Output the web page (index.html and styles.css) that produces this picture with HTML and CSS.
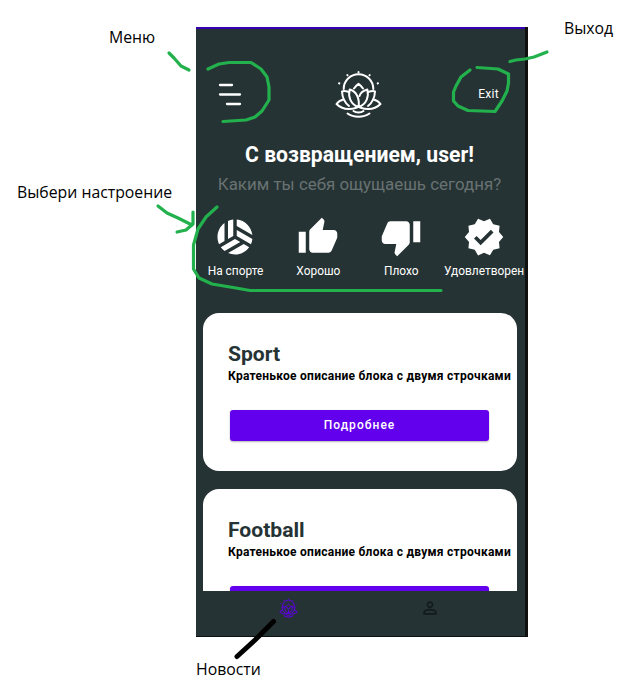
FILE: index.html
```
<!DOCTYPE html>
<html lang="ru">
<head>
<meta charset="utf-8">
<title>Новости</title>
<link rel="stylesheet" href="styles.css">
</head>
<body>
<svg class="defs" width="0" height="0" aria-hidden="true">
  <symbol id="lotus" viewBox="0 0 47 50">
    <g fill="none" stroke="currentColor" stroke-linecap="round" stroke-linejoin="round">
      <path d="M8.700 20A14.800 14.800 0 0 1 38.300 20"/>
      <path d="M19 19.500Q21 16.500 23.500 14.800Q26 16.500 28 19.500"/>
      <path d="M23.500 38C15 35 13 27 14.700 20.500C21 22 25 29 23.500 38C32 35 34 27 32.300 20.500C28.500 21.500 25.500 23.500 24.500 27"/>
      <path d="M14 23Q9 21.500 7 22.500Q7.500 32 14 37M33 23Q38 21.500 40 22.500Q39.500 32 33 37"/>
      <path d="M8.500 30.500Q4 31.500 1.500 35C7 40.500 15 41 22 38.500M38.500 30.500Q43 31.500 45.500 35C40 40.500 32 41 25 38.500"/>
      <path d="M18.500 42Q20.500 43.500 23.500 43.500T28.500 42M12.500 44.500Q17 47.700 23.500 47.700T34.500 44.500"/>
      <path d="M23.500 3V3.400M12.300 6L12.500 6.300M34.700 6L34.500 6.300M4 14.200L4.300 14.400M43 14.200L42.700 14.400"/>
    </g>
  </symbol>
</svg>

<main class="phone">
  <div class="screen">
    <div class="status"></div>
    <header class="top">
      <svg class="menu" viewBox="0 0 26 26"><path d="M4 4H16M4 13.500H24M11 23H24"/></svg>
      <svg class="logo"><use href="#lotus"/></svg>
      <span class="exit">Exit</span>
    </header>
    <section class="greeting">
      <h1>С возвращением, user!</h1>
      <p>Каким ты себя ощущаешь сегодня?</p>
    </section>
    <section class="moods">
      <div class="mood">
        <svg viewBox="0 0 24 24"><path d="M6 4.010C3.580 5.840 2 8.730 2 12c0 1.460.32 2.850.89 4.110L6 14.310zM11 11.420V2.050c-1.060.11-2.070.38-3 .79v10.320zM12 13.150l-8.110 4.680c.61.84 1.340 1.590 2.180 2.200L15 14.890zM13 7.960v3.460l8.110 4.680c.42-.93.70-1.930.82-2.980zM8.070 21.200c1.210.51 2.530.80 3.930.80 3.340 0 6.290-1.650 8.110-4.160L17 16.040zM21.920 10.810c-.55-4.630-4.260-8.300-8.920-8.760v3.600z"/></svg>
        <span>На спорте</span>
      </div>
      <div class="mood">
        <svg viewBox="0 0 24 24"><path d="M1 21h4V9H1v12zm22-11c0-1.100-.9-2-2-2h-6.310l.95-4.570.03-.32c0-.41-.17-.79-.44-1.060L14.170 1 7.590 7.590C7.220 7.950 7 8.450 7 9v10c0 1.100.9 2 2 2h9c.83 0 1.540-.5 1.840-1.220l3.020-7.050c.09-.23.14-.47.14-.73z"/></svg>
        <span>Хорошо</span>
      </div>
      <div class="mood">
        <svg viewBox="0 0 24 24"><path transform="rotate(180 12 12)" d="M1 21h4V9H1v12zm22-11c0-1.100-.9-2-2-2h-6.310l.95-4.570.03-.32c0-.41-.17-.79-.44-1.060L14.170 1 7.590 7.590C7.220 7.950 7 8.450 7 9v10c0 1.100.9 2 2 2h9c.83 0 1.540-.5 1.840-1.220l3.020-7.050c.09-.23.14-.47.14-.73z"/></svg>
        <span>Плохо</span>
      </div>
      <div class="mood">
        <svg viewBox="0 0 24 24"><path d="M23 12l-2.440-2.790.34-3.690-3.610-.82-1.890-3.200L12 2.960 8.600 1.500 6.710 4.690 3.100 5.500l.34 3.700L1 12l2.440 2.790-.34 3.700 3.610.82L8.600 22.500l3.400-1.470 3.400 1.460 1.890-3.190 3.610-.82-.34-3.690zM10.090 16.720l-3.800-3.810 1.480-1.480 2.320 2.330 5.850-5.870 1.480 1.480z" fill-rule="evenodd"/></svg>
        <span>Удовлетворен</span>
      </div>
    </section>
    <section class="feed">
      <article class="card">
        <h2>Sport</h2>
        <p>Кратенькое описание блока с двумя строчками</p>
        <button>Подробнее</button>
      </article>
      <article class="card">
        <h2>Football</h2>
        <p>Кратенькое описание блока с двумя строчками</p>
        <button></button>
      </article>
    </section>
    <nav class="tabs">
      <svg class="tab-news"><use href="#lotus"/></svg>
      <svg class="tab-user" viewBox="0 0 24 24"><path d="M12 6c1.100 0 2 .9 2 2s-.9 2-2 2-2-.9-2-2 .9-2 2-2m0 9c2.700 0 5.800 1.290 6 2v1H6v-.99c.2-.72 3.300-2.010 6-2.010m0-11C9.790 4 8 5.790 8 8s1.790 4 4 4 4-1.790 4-4-1.790-4-4-4zm0 9c-2.670 0-8 1.340-8 4v3h16v-3c0-2.660-5.330-4-8-4z"/></svg>
    </nav>
  </div>
</main>

<svg class="marks" viewBox="0 0 619 687">
  <g class="pen">
    <path d="M169 53L174 58L181 66L189 70"/>
    <path d="M208 69L219 64L229 62.500H251L261 69L267 77L269 87V100L262 111L255 117L246 120L223 121.500"/>
    <path d="M547 52L534 57L525 59L516 60L510 61.500"/>
    <path d="M470 70L461 77L456 86L453.500 92V101L458 106L468 110.500L495 111.500L502 101L507 91L508.500 83V74L498 69L477 67.500"/>
    <path d="M158 206L167 213L178 218L192 225M193 212V224L186 230L177 232"/>
    <path d="M217 207L206 217L198 229L193.500 245V269L199 278L212 284L236 288L250 290.500H441"/>
  </g>
  <path class="pen-black" d="M273.500 621.500L255 640L237 656.500"/>
</svg>
<span class="note note-menu">Меню</span>
<span class="note note-exit">Выход</span>
<span class="note note-mood">Выбери настроение</span>
<span class="note note-news">Новости</span>
</body>
</html>
```
FILE: styles.css
```
* { box-sizing: border-box; }
body { margin: 0; width: 619px; height: 687px; position: relative; overflow: hidden; background: #fff; font-family: Roboto, sans-serif; }
h1, h2, p { margin: 0; }
.defs { position: absolute; }
.phone { margin: 0; padding: 27px 0 0 196px; }
.screen { width: 332px; height: 610px; display: flex; flex-direction: column; overflow: hidden; background: #263334; border-right: 3px solid #101010; border-bottom: 1px solid #0b1010; }
.status { height: 2px; flex: none; background: #3700b3; }
.top { height: 112px; flex: none; display: grid; grid-template-columns: 1fr 47px 1fr; align-items: center; padding: 20px 26px 0 20px; }
.menu { width: 26px; height: 26px; margin-top: -3px; fill: none; stroke: #fff; stroke-width: 2.300; stroke-linecap: round; }
.logo { width: 47px; height: 50px; margin-top: -2px; margin-left: 1px; color: #fff; stroke-width: 2; }
.exit { justify-self: end; color: #fff; font-size: 12px; line-height: 14px; letter-spacing: .3px; margin-top: -3px; }
.greeting { height: 72px; flex: none; text-align: center; white-space: nowrap; margin-left: -2px; }
.greeting h1 { color: #fff; font-size: 21.150px; line-height: 28px; font-weight: 700; }
.greeting p { color: #687272; font-size: 16.900px; line-height: 22px; margin-top: 4px; }
.moods { height: 94px; flex: none; display: grid; grid-template-columns: repeat(4, 82.900px); margin-left: -2px; padding-top: 3px; }
.mood { display: flex; flex-direction: column; align-items: center; white-space: nowrap; color: #fff; font-size: 11.900px; line-height: 14px; gap: 6px; }
.mood svg { width: 42px; height: 42px; fill: #fff; }
.feed { flex: 1; min-height: 0; overflow: hidden; display: flex; flex-direction: column; gap: 18px; padding: 6px 8px 0 7px; }
.card { height: 158px; flex: none; border-radius: 16px; background: #fff; padding: 27px 0 0 25px; display: flex; flex-direction: column; align-items: flex-start; white-space: nowrap; }
.card h2 { color: #263334; font-size: 21.100px; line-height: 28px; }
.card p { color: #000; font-size: 12px; line-height: 16px; font-weight: 700; letter-spacing: .26px; }
.card button { width: 259px; height: 31px; margin: 26px 0 0 2px; padding: 0; border: 0; border-radius: 3px; background: #6200ee; color: #fff; font: 500 12px/31px Roboto, sans-serif; letter-spacing: 1.060px; box-shadow: 0 1px 2px rgba(0,0,0,.3); }
.tabs { height: 45px; flex: none; display: grid; grid-template-columns: 185px 98px; justify-items: center; align-items: start; background: #263334; }
.tab-news { width: 19px; height: 20px; margin-top: 7px; color: #6200ee; stroke-width: 2.500; }
.tab-user { width: 20px; height: 20px; margin-top: 7px; fill: #111b1b; }
.marks { position: absolute; left: 0; top: 0; width: 619px; height: 687px; fill: none; stroke-linecap: round; stroke-linejoin: round; }
.pen { stroke: #22b14c; stroke-width: 3.200; }
.pen-black { stroke: #000; stroke-width: 5; }
.note { position: absolute; white-space: nowrap; color: #000; font: 15.800px/22px "Open Sans", sans-serif; }
.note-menu { left: 109px; top: 26px; }
.note-exit { left: 564px; top: 17px; }
.note-mood { left: 17px; top: 181px; }
.note-news { left: 196px; top: 658px; }
```
